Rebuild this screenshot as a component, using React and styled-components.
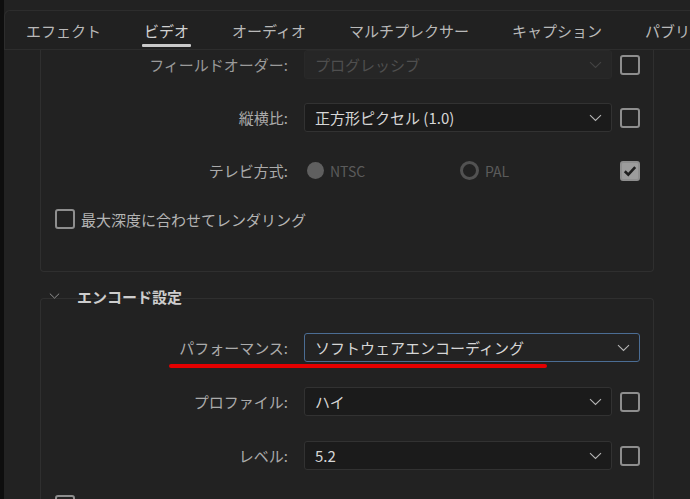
import React from 'react';
import styled, { createGlobalStyle } from 'styled-components';

const GlobalStyle = createGlobalStyle`
    html, body {
        margin: 0;
        padding: 0;
        background: #222222;
        overflow: hidden;
    }
    body {
        font-family: "Noto Sans CJK JP", "Noto Sans", sans-serif;
        font-size: 15px;
        color: #b4b4b4;
    }
`;

const Page = styled.div`
    display: flex;
    width: 690px;
    height: 499px;
    overflow: hidden;
`;

const Edge = styled.div`
    width: 4px;
    flex-shrink: 0;
    background: #0e0e0e;
`;

const Main = styled.div`
    flex: 1;
    display: flex;
    flex-direction: column;
    padding-top: 10px;
    background: #222222;
    min-width: 0;
`;

const TabBar = styled.div`
    display: flex;
    height: 38px;
    border: 1px solid #2d2d2d;
    border-right: none;
    border-radius: 6px 0 0 0;
    background: #212121;
    overflow: hidden;
    white-space: nowrap;
`;

const Tab = styled.div`
    position: relative;
    display: flex;
    align-items: center;
    padding: 0 22px 0 21px;
    color: ${p => (p.active ? '#d2d2d2' : '#b9b9b9')};
    flex-shrink: 0;

    &::after {
        content: '';
        display: ${p => (p.active ? 'block' : 'none')};
        position: absolute;
        left: 19px;
        right: 20px;
        bottom: 2px;
        height: 3px;
        border-radius: 1px;
        background: #c9c9c9;
    }
`;

const Content = styled.div`
    flex: 1;
    padding: 0 36px;
    overflow: hidden;
`;

const Group = styled.div`
    position: relative;
    display: flex;
    flex-direction: column;
    gap: ${p => p.gap}px;
    border: 1px solid #2f2f2f;
    border-top: ${p => (p.cut ? 'none' : '1px solid #2f2f2f')};
    border-radius: ${p => (p.cut ? '0 0 4px 4px' : '4px 4px 0 0')};
    border-bottom: ${p => (p.cut ? '1px solid #2f2f2f' : 'none')};
    padding: ${p => (p.cut ? '0 0 42px' : '34px 0 0')};
    margin-top: ${p => (p.cut ? 0 : -10)}px;
`;

const SectionHeader = styled.div`
    position: relative;
    z-index: 1;
    display: flex;
    align-items: center;
    height: 24px;
    margin-top: 12px;
    padding-left: 9px;
    gap: 17px;
    font-weight: bold;
    color: #cdcdcd;
`;

const Row = styled.div`
    display: flex;
    align-items: center;
    height: ${p => (p.short ? 20 : 29)}px;
    flex-shrink: 0;
`;

const Label = styled.div`
    width: 247px;
    flex-shrink: 0;
    text-align: right;
    margin-right: 16px;
    color: ${p => (p.dim ? '#9a9a9a' : '#ababab')};
    white-space: nowrap;
`;

const Select = styled.div`
    display: flex;
    align-items: center;
    justify-content: space-between;
    box-sizing: border-box;
    width: ${p => (p.wide ? 336 : 308)}px;
    height: 29px;
    padding: 0 9px 0 10px;
    border: 1px solid ${p => (p.focus ? '#4b6d94' : p.disabled ? '#292929' : '#323232')};
    border-radius: 3px;
    background: ${p => (p.focus ? '#232323' : p.disabled ? '#262626' : '#1b1b1b')};
    color: ${p => (p.disabled ? '#4f4f4f' : '#d6d6d6')};
    white-space: nowrap;

    svg {
        flex-shrink: 0;
    }
`;

const Check = styled.div`
    box-sizing: border-box;
    width: 20px;
    height: 20px;
    margin-left: ${p => (p.inline ? 0 : 8)}px;
    border: 2px solid #8e8e8e;
    border-radius: 3px;
    background: ${p => (p.checked ? '#9c9c9c' : 'transparent')};
    display: flex;
    align-items: center;
    justify-content: center;
    flex-shrink: 0;
`;

const CheckRow = styled(Row)`
    padding-left: 14px;
    gap: 6px;
    color: #b4b4b4;
`;

const RadioGroup = styled.div`
    display: flex;
    align-items: center;
    width: 308px;
    padding-left: 3px;
    box-sizing: border-box;
`;

const RadioOption = styled.div`
    display: flex;
    align-items: center;
    gap: 6px;
    width: ${p => p.w}px;
    color: #5b5b5b;
    font-size: 14px;
`;

const Radio = styled.div`
    box-sizing: border-box;
    width: ${p => (p.on ? 17 : 19)}px;
    height: ${p => (p.on ? 17 : 19)}px;
    border-radius: 50%;
    background: ${p => (p.on ? '#5f5f5f' : 'transparent')};
    border: ${p => (p.on ? 'none' : '3px solid #525252')};
`;

const Marker = styled.div`
    position: absolute;
    left: 128px;
    top: 65px;
    width: 378px;
    height: 4px;
    border-radius: 2px;
    background: #e40000;
`;

const Chevron = ({ color = '#b5b5b5', w = 13 }) => (
    <svg width={w} height="8" viewBox="0 0 13 8">
        <path d="M1 1.2 L6.5 6.5 L12 1.2" fill="none" stroke={color} strokeWidth="1.1" />
    </svg>
);

const Tick = () => (
    <svg width="14" height="12" viewBox="0 0 14 12">
        <path d="M1.8 6.2 L5.3 9.6 L12.2 2.2" fill="none" stroke="#1e1e1e" strokeWidth="2.6" />
    </svg>
);

const tabs = ['エフェクト', 'ビデオ', 'オーディオ', 'マルチプレクサー', 'キャプション', 'パブリッシュ'];

const Dropdown = ({ children, wide, focus, disabled }) => (
    <Select wide={wide} focus={focus} disabled={disabled}>
        <span>{children}</span>
        <Chevron color={disabled ? '#444' : '#b5b5b5'} />
    </Select>
);

export default function App() {
    return (
        <Page>
            <GlobalStyle />
            <Edge />
            <Main>
                <TabBar>
                    {tabs.map(t => (
                        <Tab key={t} active={t === 'ビデオ'}>{t}</Tab>
                    ))}
                </TabBar>
                <Content>
                    <Group cut gap={24}>
                        <Row>
                            <Label dim>フィールドオーダー:</Label>
                            <Dropdown disabled>プログレッシブ</Dropdown>
                            <Check />
                        </Row>
                        <Row>
                            <Label>縦横比:</Label>
                            <Dropdown>正方形ピクセル (1.0)</Dropdown>
                            <Check />
                        </Row>
                        <Row>
                            <Label>テレビ方式:</Label>
                            <RadioGroup>
                                <RadioOption w={153}><Radio on />NTSC</RadioOption>
                                <RadioOption w={100}><Radio />PAL</RadioOption>
                            </RadioGroup>
                            <Check checked><Tick /></Check>
                        </Row>
                        <CheckRow short>
                            <Check inline />
                            最大深度に合わせてレンダリング
                        </CheckRow>
                    </Group>

                    <SectionHeader>
                        <Chevron color="#9a9a9a" w={11} />
                        エンコード設定
                    </SectionHeader>

                    <Group gap={25}>
                        <Row>
                            <Label>パフォーマンス:</Label>
                            <Dropdown wide focus>ソフトウェアエンコーディング</Dropdown>
                        </Row>
                        <Row>
                            <Label>プロファイル:</Label>
                            <Dropdown>ハイ</Dropdown>
                            <Check />
                        </Row>
                        <Row>
                            <Label>レベル:</Label>
                            <Dropdown>5.2</Dropdown>
                            <Check />
                        </Row>
                        <CheckRow short>
                            <Check inline />
                            最大ビット深度でレンダリング
                        </CheckRow>
                        <Marker />
                    </Group>
                </Content>
            </Main>
        </Page>
    );
}
